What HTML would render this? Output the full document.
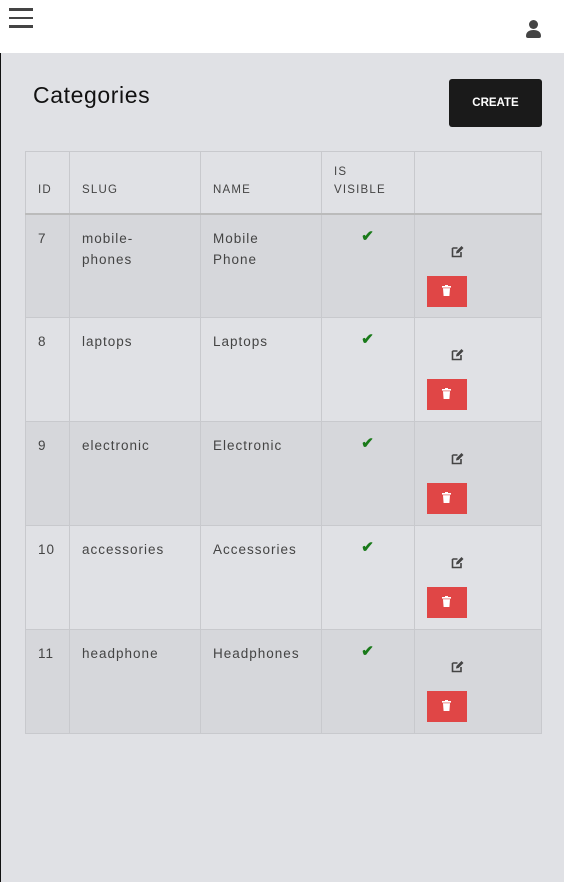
<!DOCTYPE html>
<html><head><style>
body{margin:0;width:564px;height:882px;background:#e0e1e5;font-family:"Liberation Sans",sans-serif;position:relative;overflow:hidden;border-left:1px solid #111;box-sizing:border-box}
.hdr{position:absolute;left:-1px;top:0;width:565px;height:53px;background:#fff}
.ham{position:absolute;left:9px;top:8px;width:24px}
.ham div{height:2.5px;background:#444;margin-bottom:6px}
h1{position:absolute;left:32px;top:82px;margin:0;font-weight:normal;font-size:23px;color:#111;letter-spacing:0.6px}
.btn{position:absolute;left:448px;top:79px;width:93px;height:48px;background:#1a1a1a;border-radius:3px;color:#fff;font-weight:bold;font-size:11.5px;text-align:center;line-height:48px}
table{position:absolute;left:24px;top:151px;border-collapse:collapse;width:517px}
td,th{border:1px solid #c8c9cd;vertical-align:top;font-size:13.5px;color:#444;letter-spacing:1px;padding:0 12px;box-sizing:border-box}
th{height:62px;font-weight:normal;font-size:11.5px;vertical-align:bottom;text-align:left;padding-bottom:14px;line-height:18px;letter-spacing:1.2px;border-bottom:2px solid #bbb}
td{height:104px;padding-top:13px;line-height:21px}
tr.o td{background:#d6d7db}
.chk{color:#1a7a1a;font-weight:bold;text-align:center;font-size:15px;line-height:16px;padding-top:14px}
.act{position:relative}
.ed{position:absolute;left:36px;top:30px}
.del{position:absolute;left:12px;top:61px;width:40px;height:31px;background:#e04646}
</style></head><body>
<div class="hdr"><div class="ham"><div></div><div></div><div></div></div>
<svg style="position:absolute;left:525px;top:19px" width="17" height="20" viewBox="0 0 17 20"><circle cx="8.5" cy="5.5" r="4.5" fill="#444"/><path d="M1 17c0-4 3-6 7.5-6s7.5 2 7.5 6c0 1.5-1 2-2 2H3c-1 0-2-.5-2-2z" fill="#444"/></svg></div>
<h1>Categories</h1>
<div class="btn">CREATE</div>
<table>
<tr><th style="width:44px">ID</th><th style="width:131px">SLUG</th><th style="width:121px">NAME</th><th style="width:93px">IS<br>VISIBLE</th><th></th></tr>
<tr class="o"><td>7</td><td>mobile-<br>phones</td><td>Mobile<br>Phone</td><td class="chk">✔</td><td class="act"><svg class="ed" width="13" height="13" viewBox="0 0 13 13"><path d="M1.5 3h5M1.5 3v8.5h8.5V7" stroke="#444" stroke-width="1.6" fill="none"/><path d="M5 8.5l.5-2.5 5-5 2 2-5 5z" fill="#444"/></svg><div class="del"><svg style="position:absolute;left:15px;top:9px" width="9" height="11" viewBox="0 0 9 11"><rect x="0" y="1" width="9" height="1.6" fill="#fff"/><rect x="3" y="0" width="3" height="1.5" fill="#fff"/><path d="M1 3.2h7l-.6 7.8H1.6z" fill="#fff"/></svg></div></td></tr>
<tr><td>8</td><td>laptops</td><td>Laptops</td><td class="chk">✔</td><td class="act"><svg class="ed" width="13" height="13" viewBox="0 0 13 13"><path d="M1.5 3h5M1.5 3v8.5h8.5V7" stroke="#444" stroke-width="1.6" fill="none"/><path d="M5 8.5l.5-2.5 5-5 2 2-5 5z" fill="#444"/></svg><div class="del"><svg style="position:absolute;left:15px;top:9px" width="9" height="11" viewBox="0 0 9 11"><rect x="0" y="1" width="9" height="1.6" fill="#fff"/><rect x="3" y="0" width="3" height="1.5" fill="#fff"/><path d="M1 3.2h7l-.6 7.8H1.6z" fill="#fff"/></svg></div></td></tr>
<tr class="o"><td>9</td><td>electronic</td><td>Electronic</td><td class="chk">✔</td><td class="act"><svg class="ed" width="13" height="13" viewBox="0 0 13 13"><path d="M1.5 3h5M1.5 3v8.5h8.5V7" stroke="#444" stroke-width="1.6" fill="none"/><path d="M5 8.5l.5-2.5 5-5 2 2-5 5z" fill="#444"/></svg><div class="del"><svg style="position:absolute;left:15px;top:9px" width="9" height="11" viewBox="0 0 9 11"><rect x="0" y="1" width="9" height="1.6" fill="#fff"/><rect x="3" y="0" width="3" height="1.5" fill="#fff"/><path d="M1 3.2h7l-.6 7.8H1.6z" fill="#fff"/></svg></div></td></tr>
<tr><td>10</td><td>accessories</td><td>Accessories</td><td class="chk">✔</td><td class="act"><svg class="ed" width="13" height="13" viewBox="0 0 13 13"><path d="M1.5 3h5M1.5 3v8.5h8.5V7" stroke="#444" stroke-width="1.6" fill="none"/><path d="M5 8.5l.5-2.5 5-5 2 2-5 5z" fill="#444"/></svg><div class="del"><svg style="position:absolute;left:15px;top:9px" width="9" height="11" viewBox="0 0 9 11"><rect x="0" y="1" width="9" height="1.6" fill="#fff"/><rect x="3" y="0" width="3" height="1.5" fill="#fff"/><path d="M1 3.2h7l-.6 7.8H1.6z" fill="#fff"/></svg></div></td></tr>
<tr class="o"><td>11</td><td>headphone</td><td>Headphones</td><td class="chk">✔</td><td class="act"><svg class="ed" width="13" height="13" viewBox="0 0 13 13"><path d="M1.5 3h5M1.5 3v8.5h8.5V7" stroke="#444" stroke-width="1.6" fill="none"/><path d="M5 8.5l.5-2.5 5-5 2 2-5 5z" fill="#444"/></svg><div class="del"><svg style="position:absolute;left:15px;top:9px" width="9" height="11" viewBox="0 0 9 11"><rect x="0" y="1" width="9" height="1.6" fill="#fff"/><rect x="3" y="0" width="3" height="1.5" fill="#fff"/><path d="M1 3.2h7l-.6 7.8H1.6z" fill="#fff"/></svg></div></td></tr>
</table>
</body></html>
